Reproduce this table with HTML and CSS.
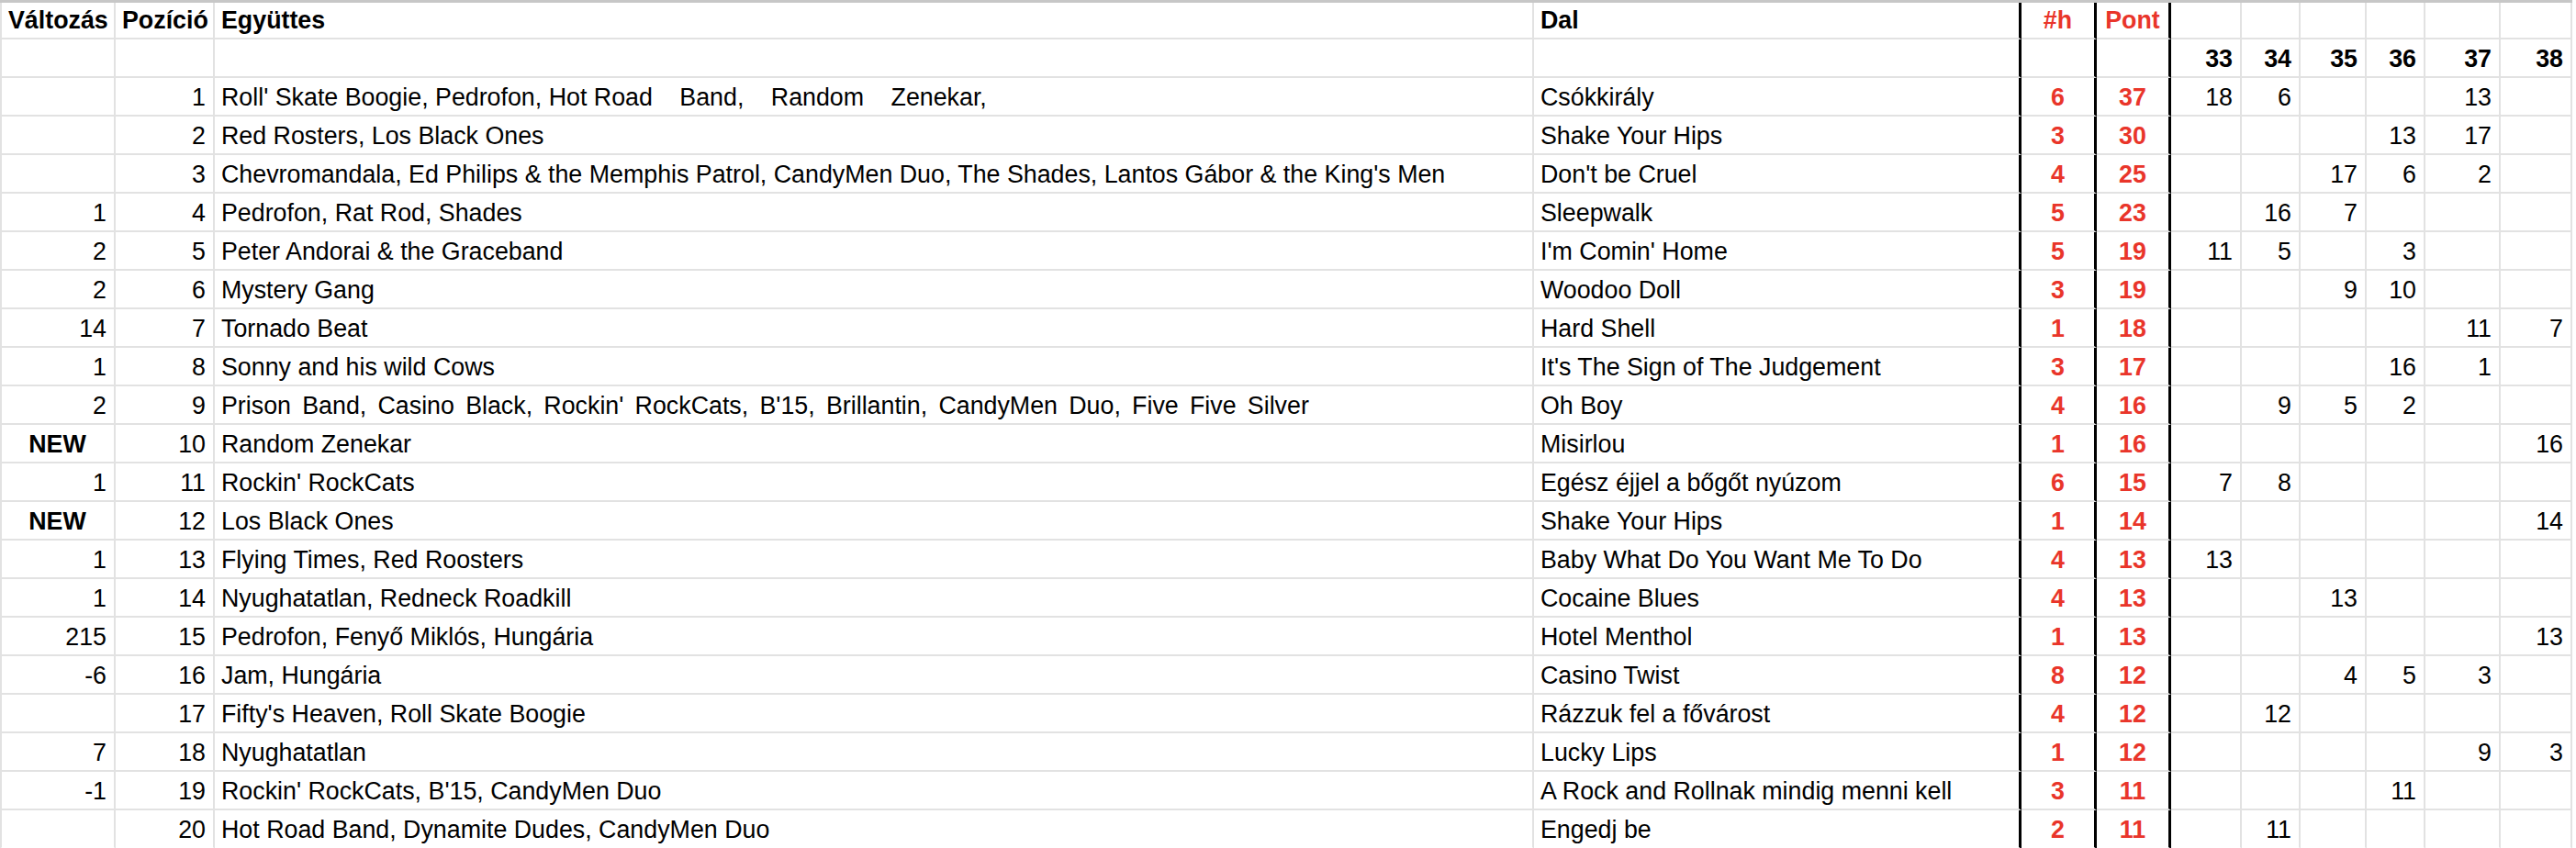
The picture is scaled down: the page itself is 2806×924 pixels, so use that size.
FILE: index.html
```html
<!DOCTYPE html>
<html lang="hu">
<head>
<meta charset="utf-8">
<title>Toplista</title>
<link rel="stylesheet" href="styles.css">
</head>
<body>
<div class="sheet">
  <div class="c hd">Változás</div><div class="c hd">Pozíció</div><div class="c hd">Együttes</div><div class="c hd">Dal</div><div class="c hd red mid">#h</div><div class="c hd red mid">Pont</div><div class="c"></div><div class="c"></div><div class="c"></div><div class="c"></div><div class="c"></div><div class="c"></div>
  <div class="c"></div><div class="c"></div><div class="c"></div><div class="c"></div><div class="c"></div><div class="c"></div><div class="c hd">33</div><div class="c hd">34</div><div class="c hd">35</div><div class="c hd">36</div><div class="c hd">37</div><div class="c hd">38</div>

  <div class="c"></div><div class="c">1</div><div class="c">Roll' Skate Boogie, Pedrofon, Hot <span class="sp-a">Road Band, Random Zenekar,</span></div><div class="c">Csókkirály</div><div class="c">6</div><div class="c">37</div><div class="c">18</div><div class="c">6</div><div class="c"></div><div class="c"></div><div class="c">13</div><div class="c"></div>
  <div class="c"></div><div class="c">2</div><div class="c">Red Rosters, Los Black Ones</div><div class="c">Shake Your Hips</div><div class="c">3</div><div class="c">30</div><div class="c"></div><div class="c"></div><div class="c"></div><div class="c">13</div><div class="c">17</div><div class="c"></div>
  <div class="c"></div><div class="c">3</div><div class="c">Chevromandala, Ed Philips &amp; the Memphis Patrol, CandyMen Duo, The Shades, Lantos Gábor &amp; the King's Men</div><div class="c">Don't be Cruel</div><div class="c">4</div><div class="c">25</div><div class="c"></div><div class="c"></div><div class="c">17</div><div class="c">6</div><div class="c">2</div><div class="c"></div>
  <div class="c">1</div><div class="c">4</div><div class="c">Pedrofon, Rat Rod, Shades</div><div class="c">Sleepwalk</div><div class="c">5</div><div class="c">23</div><div class="c"></div><div class="c">16</div><div class="c">7</div><div class="c"></div><div class="c"></div><div class="c"></div>
  <div class="c">2</div><div class="c">5</div><div class="c">Peter Andorai &amp; the Graceband</div><div class="c">I'm Comin' Home</div><div class="c">5</div><div class="c">19</div><div class="c">11</div><div class="c">5</div><div class="c"></div><div class="c">3</div><div class="c"></div><div class="c"></div>
  <div class="c">2</div><div class="c">6</div><div class="c">Mystery Gang</div><div class="c">Woodoo Doll</div><div class="c">3</div><div class="c">19</div><div class="c"></div><div class="c"></div><div class="c">9</div><div class="c">10</div><div class="c"></div><div class="c"></div>
  <div class="c">14</div><div class="c">7</div><div class="c">Tornado Beat</div><div class="c">Hard Shell</div><div class="c">1</div><div class="c">18</div><div class="c"></div><div class="c"></div><div class="c"></div><div class="c"></div><div class="c">11</div><div class="c">7</div>
  <div class="c">1</div><div class="c">8</div><div class="c">Sonny and his wild Cows</div><div class="c">It's The Sign of The Judgement</div><div class="c">3</div><div class="c">17</div><div class="c"></div><div class="c"></div><div class="c"></div><div class="c">16</div><div class="c">1</div><div class="c"></div>
  <div class="c">2</div><div class="c">9</div><div class="c"><span class="sp-b">Prison Band, Casino Black, Rockin' RockCats, B'15, Brillantin, CandyMen Duo, Five Five Silver</span></div><div class="c">Oh Boy</div><div class="c">4</div><div class="c">16</div><div class="c"></div><div class="c">9</div><div class="c">5</div><div class="c">2</div><div class="c"></div><div class="c"></div>
  <div class="c new">NEW</div><div class="c">10</div><div class="c">Random Zenekar</div><div class="c">Misirlou</div><div class="c">1</div><div class="c">16</div><div class="c"></div><div class="c"></div><div class="c"></div><div class="c"></div><div class="c"></div><div class="c">16</div>
  <div class="c">1</div><div class="c">11</div><div class="c">Rockin' RockCats</div><div class="c">Egész éjjel a bőgőt nyúzom</div><div class="c">6</div><div class="c">15</div><div class="c">7</div><div class="c">8</div><div class="c"></div><div class="c"></div><div class="c"></div><div class="c"></div>
  <div class="c new">NEW</div><div class="c">12</div><div class="c">Los Black Ones</div><div class="c">Shake Your Hips</div><div class="c">1</div><div class="c">14</div><div class="c"></div><div class="c"></div><div class="c"></div><div class="c"></div><div class="c"></div><div class="c">14</div>
  <div class="c">1</div><div class="c">13</div><div class="c">Flying Times, Red Roosters</div><div class="c">Baby What Do You Want Me To Do</div><div class="c">4</div><div class="c">13</div><div class="c">13</div><div class="c"></div><div class="c"></div><div class="c"></div><div class="c"></div><div class="c"></div>
  <div class="c">1</div><div class="c">14</div><div class="c">Nyughatatlan, Redneck Roadkill</div><div class="c">Cocaine Blues</div><div class="c">4</div><div class="c">13</div><div class="c"></div><div class="c"></div><div class="c">13</div><div class="c"></div><div class="c"></div><div class="c"></div>
  <div class="c">215</div><div class="c">15</div><div class="c">Pedrofon, Fenyő Miklós, Hungária</div><div class="c">Hotel Menthol</div><div class="c">1</div><div class="c">13</div><div class="c"></div><div class="c"></div><div class="c"></div><div class="c"></div><div class="c"></div><div class="c">13</div>
  <div class="c">-6</div><div class="c">16</div><div class="c">Jam, Hungária</div><div class="c">Casino Twist</div><div class="c">8</div><div class="c">12</div><div class="c"></div><div class="c"></div><div class="c">4</div><div class="c">5</div><div class="c">3</div><div class="c"></div>
  <div class="c"></div><div class="c">17</div><div class="c">Fifty's Heaven, Roll Skate Boogie</div><div class="c">Rázzuk fel a fővárost</div><div class="c">4</div><div class="c">12</div><div class="c"></div><div class="c">12</div><div class="c"></div><div class="c"></div><div class="c"></div><div class="c"></div>
  <div class="c">7</div><div class="c">18</div><div class="c">Nyughatatlan</div><div class="c">Lucky Lips</div><div class="c">1</div><div class="c">12</div><div class="c"></div><div class="c"></div><div class="c"></div><div class="c"></div><div class="c">9</div><div class="c">3</div>
  <div class="c">-1</div><div class="c">19</div><div class="c">Rockin' RockCats, B'15, CandyMen Duo</div><div class="c">A Rock and Rollnak mindig menni kell</div><div class="c">3</div><div class="c">11</div><div class="c"></div><div class="c"></div><div class="c"></div><div class="c">11</div><div class="c"></div><div class="c"></div>
  <div class="c last"></div><div class="c last">20</div><div class="c last">Hot Road Band, Dynamite Dudes, CandyMen Duo</div><div class="c last">Engedj be</div><div class="c last">2</div><div class="c last">11</div><div class="c last"></div><div class="c last">11</div><div class="c last"></div><div class="c last"></div><div class="c last"></div><div class="c last"></div>
</div>
</body>
</html>
```
FILE: styles.css
```css
html, body {
  margin: 0;
  padding: 0;
  background: #ffffff;
}

.sheet {
  display: grid;
  grid-template-columns: 126px 108px 1437px 531px 82px 81px 77px 64px 72px 64px 82px 78px;
  grid-template-rows: 40px repeat(21, 42px);
  border-top: 3px solid #c7c7c7;
  width: 2802px;
  font-family: "Liberation Sans", Arial, sans-serif;
  font-size: 26.8px;
  line-height: 1;
  color: #000000;
}

.c {
  box-sizing: border-box;
  display: flex;
  align-items: flex-end;
  justify-content: flex-end;
  padding: 0 8px 5px 7px;
  border-right: 2px solid #e2e2e2;
  border-bottom: 2px solid #e2e2e2;
  white-space: pre;
  overflow: hidden;
}

.c.last {
  border-bottom-color: transparent;
}

.sheet > .c:nth-child(12n+1) {
  border-left: 2px solid #e2e2e2;
}

/* Együttes and Dal: left aligned */
.sheet > .c:nth-child(12n+3),
.sheet > .c:nth-child(12n+4) {
  justify-content: flex-start;
}

/* wider spacing seen in two long Együttes cells */
.sp-a {
  word-spacing: 22px;
}

.sp-b {
  word-spacing: 4.8px;
}

/* thick black separators around #h and Pont */
.sheet > .c:nth-child(12n+4),
.sheet > .c:nth-child(12n+5),
.sheet > .c:nth-child(12n+6) {
  border-right: 3px solid #000000;
}

/* #h and Pont: centered, bold, red */
.sheet > .c:nth-child(12n+5),
.sheet > .c:nth-child(12n+6) {
  justify-content: center;
  font-weight: 700;
  color: #e9352a;
  padding-left: 6px;
  padding-right: 6px;
}

.hd {
  font-weight: 700;
}

.sheet > .hd:nth-child(-n+4) {
  justify-content: flex-start;
}

.red {
  color: #e9352a;
}

.new {
  font-weight: 700;
  justify-content: center;
}
```
